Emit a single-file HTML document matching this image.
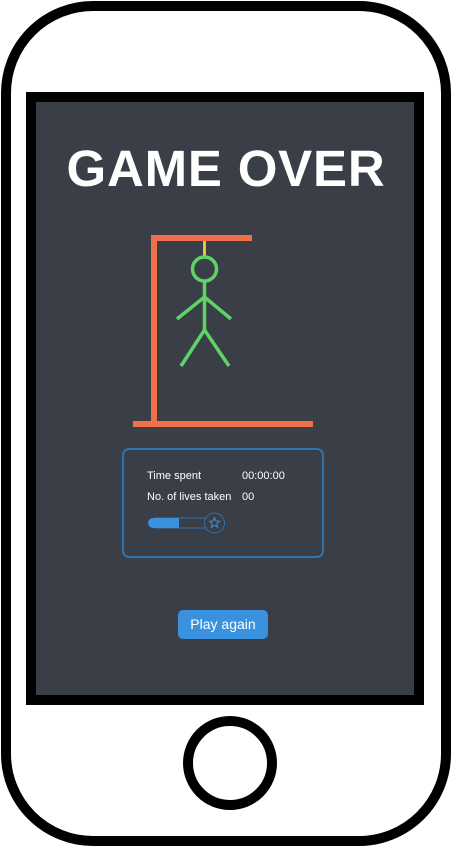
<!DOCTYPE html>
<html><head><style>
html,body{margin:0;padding:0;width:452px;height:847px;background:#fff;overflow:hidden;font-family:"Liberation Sans",sans-serif}
.phone{position:absolute;left:1px;top:1px;width:430px;height:825px;border:10px solid #000;border-radius:92px;}
.screenb{position:absolute;left:26px;top:92px;width:398px;height:613px;background:#000}
.screen{position:absolute;left:36px;top:102px;width:378px;height:593px;background:#3a3e47}
.title{position:absolute;left:0;width:452px;top:139px;text-align:center;color:#fff;font-weight:bold;font-size:51px;letter-spacing:0.8px}
.card{position:absolute;left:122px;top:448px;width:198px;height:106px;border:2px solid #2f73b0;border-radius:7px}
.t{position:absolute;color:#fff;font-size:11px}
.btn{position:absolute;left:178px;top:610px;width:90px;height:29px;background:#3a91dd;border-radius:5px;color:#fff;font-size:14px;text-align:center;line-height:29px}
.home{position:absolute;left:183px;top:716px;width:74px;height:74px;border:10px solid #000;border-radius:50%}
</style></head><body>
<div class="phone"></div>
<div class="screenb"></div>
<div class="screen"></div>
<div class="title">GAME OVER</div>
<svg style="position:absolute;left:0;top:0" width="452" height="847">
<g stroke="#f0704c" stroke-width="6" fill="none">
<line x1="154" y1="238" x2="154" y2="424"/>
<line x1="151" y1="238" x2="252" y2="238"/>
<line x1="133" y1="424" x2="313" y2="424"/>
</g>
<line x1="204.5" y1="241" x2="204.5" y2="257" stroke="#e8c23a" stroke-width="3"/>
<g stroke="#5ed466" stroke-width="3.5" fill="none">
<circle cx="204.5" cy="269" r="12"/>
<line x1="204.5" y1="281" x2="204.5" y2="331"/>
<line x1="204.5" y1="297" x2="177" y2="319"/>
<line x1="204.5" y1="297" x2="231" y2="319"/>
<line x1="204.5" y1="330" x2="181" y2="366"/>
<line x1="204.5" y1="330" x2="229" y2="366"/>
</g>
<path d="M154 518 H206 M154 528 H206" stroke="#2f73b0" stroke-width="1" fill="none"/>
<rect x="148" y="518" width="31" height="10" rx="5" fill="#3a91dd"/>
<rect x="170" y="518" width="9" height="10" fill="#3a91dd"/>
<circle cx="214.5" cy="523" r="10" stroke="#2f73b0" stroke-width="1" fill="#3a3e47"/>
<path d="M214.5 517.5 L216 521 L219.5 521.3 L216.8 523.6 L217.7 527.2 L214.5 525.3 L211.3 527.2 L212.2 523.6 L209.5 521.3 L213 521 Z" stroke="#3a91dd" stroke-width="1" fill="none"/>
</svg>
<div class="card"></div>
<div class="t" style="left:147px;top:470px">Time spent</div>
<div class="t" style="left:242px;top:470px">00:00:00</div>
<div class="t" style="left:147px;top:491px">No. of lives taken</div>
<div class="t" style="left:242px;top:491px">00</div>
<div class="btn">Play again</div>
<div class="home"></div>
</body></html>
